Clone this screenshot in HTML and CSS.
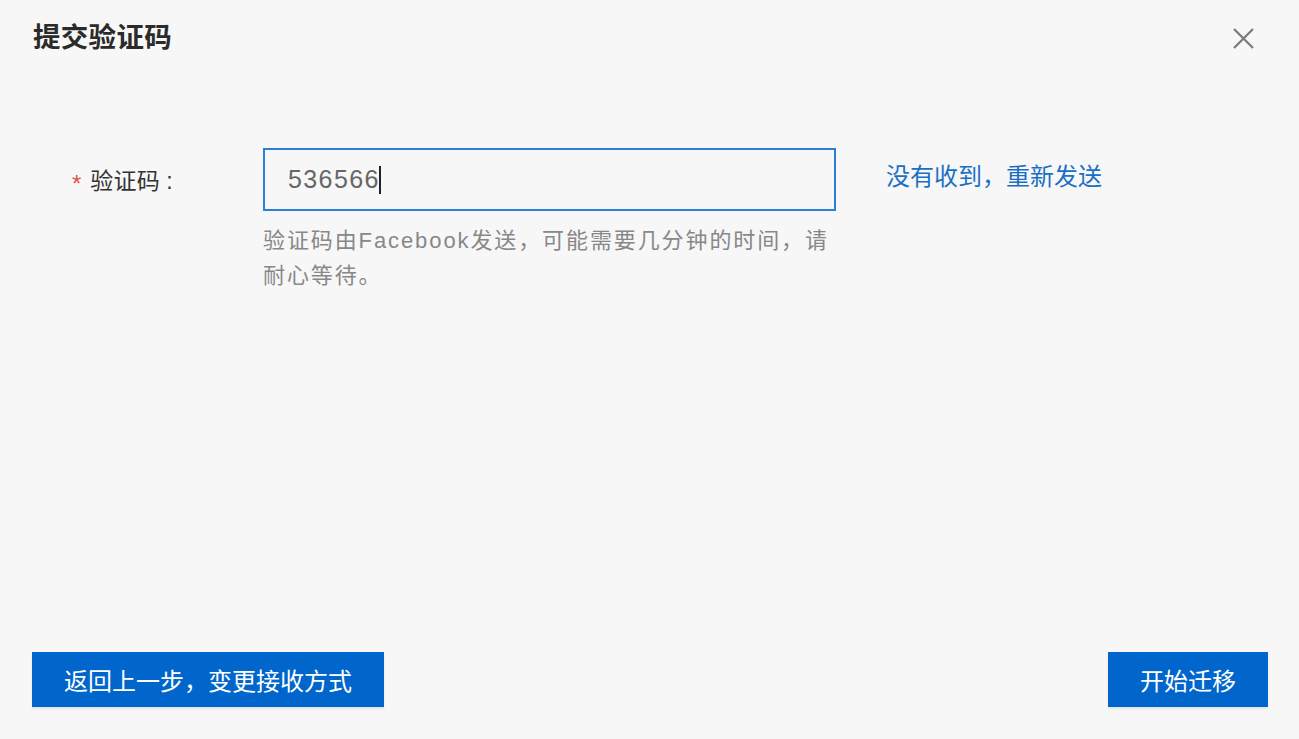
FILE: index.html
```html
<!DOCTYPE html>
<html lang="zh">
<head>
<meta charset="utf-8">
<title>提交验证码</title>
<link rel="stylesheet" href="styles.css">
</head>
<body>
<div class="dialog">
  <div class="header">
    <h1 class="title">提交验证码</h1>
    <button class="close" aria-label="关闭">
      <svg width="21" height="21" viewBox="0 0 21 21"><path d="M1 1 L20 20 M20 1 L1 20" stroke="#7a7a7a" stroke-width="2.2" fill="none"/></svg>
    </button>
  </div>
  <div class="body">
    <div class="row">
      <div class="label"><span class="star">*</span><span class="label-text">验证码</span> :</div>
      <div class="field">
        <div class="input">536566<span class="caret"></span></div>
        <div class="help">验证码由Facebook发送，可能需要几分钟的时间，请耐心等待。</div>
      </div>
      <a class="link" href="#">没有收到，重新发送</a>
    </div>
  </div>
  <div class="footer">
    <button class="btn">返回上一步，变更接收方式</button>
    <button class="btn">开始迁移</button>
  </div>
</div>
</body>
</html>
```
FILE: styles.css
```css
html, body {
  margin: 0;
  padding: 0;
  background: #f7f7f7;
}
body {
  font-family: "Liberation Sans", "Noto Sans CJK SC", sans-serif;
  color: #333;
}
.dialog {
  height: 739px;
  display: flex;
  flex-direction: column;
  box-sizing: border-box;
  padding: 0 31px 32px 32px;
}
.header {
  display: flex;
  justify-content: space-between;
  align-items: center;
  padding-top: 18px;
  height: 40px;
}
.title {
  margin: 0;
  font-size: 27.5px;
  font-weight: 700;
  letter-spacing: 0.3px;
  line-height: 38px;
  color: #2b2b2b;
  padding-left: 1px;
}
.close {
  border: 0;
  background: none;
  padding: 0;
  margin-right: 14px;
  margin-top: 0;
  width: 21px;
  height: 21px;
  display: flex;
}
.body {
  flex: 1;
  padding-top: 90px;
}
.row {
  display: flex;
  align-items: flex-start;
}
.label {
  width: 231px;
  box-sizing: border-box;
  padding-left: 40px;
  font-size: 23px;
  line-height: 63px;
  color: #333;
  white-space: nowrap;
  padding-top: 2px;
}
.label-text {
  letter-spacing: 0.2px;
}
.star {
  color: #e8504a;
  font-size: 24px;
  margin-right: 9px;
  vertical-align: -3px;
}
.field {
  width: 573px;
}
.input {
  height: 63px;
  box-sizing: border-box;
  border: 2px solid #2b80d6;
  padding-left: 23px;
  font-family: "Liberation Sans", sans-serif;
  font-size: 25px;
  letter-spacing: 1.4px;
  line-height: 59px;
  color: #666;
  display: flex;
  align-items: center;
}
.caret {
  display: inline-block;
  width: 2px;
  height: 28px;
  background: #222;
  margin-left: -1px;
}
.help {
  margin-top: 12px;
  font-size: 22px;
  letter-spacing: 1.9px;
  line-height: 35px;
  color: #888;
}
.link {
  margin-left: 50px;
  font-size: 24px;
  line-height: 58px;
  margin-top: 0;
  color: #1a6fc4;
  text-decoration: none;
}
.footer {
  display: flex;
  justify-content: space-between;
}
.btn {
  height: 55px;
  border: 0;
  background: #0066cc;
  color: #fff;
  font-family: "Noto Sans CJK SC", sans-serif;
  font-size: 24px;
  padding: 0 32px;
  box-shadow: 0 2px 2px rgba(0,0,0,0.08);
}
```
